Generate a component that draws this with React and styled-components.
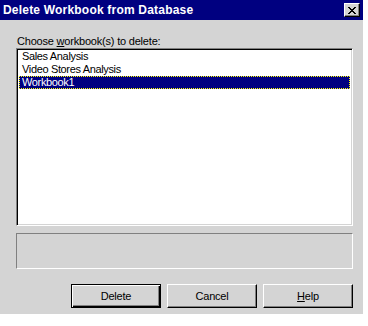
import React from "react";
import styled, { createGlobalStyle } from "styled-components";

const Global = createGlobalStyle`
  html, body { margin: 0; padding: 0; background: #ffffff; }
  body { font-family: "Liberation Sans", Arial, sans-serif; }
`;

const Window = styled.div`
  width: 363px;
  height: 314px;
  background: #d4d4d4;
  display: flex;
  flex-direction: column;
  box-sizing: border-box;
`;

const TitleBar = styled.div`
  height: 20px;
  background: #000080;
  display: flex;
  align-items: center;
  justify-content: space-between;
  padding: 0 3px 0 3px;
  box-sizing: border-box;
`;

const Title = styled.span`
  color: #ffffff;
  font-weight: bold;
  font-size: 12px;
  letter-spacing: 0.2px;
`;

const CloseButton = styled.div`
  width: 16px;
  height: 14px;
  box-sizing: border-box;
  background: #d4d4d4;
  border-top: 1px solid #ffffff;
  border-left: 1px solid #ffffff;
  border-right: 1px solid #000000;
  border-bottom: 1px solid #000000;
  box-shadow: inset -1px -1px 0 #808080;
  display: flex;
  align-items: center;
  justify-content: center;
`;

const Body = styled.div`
  flex: 1;
  display: flex;
  flex-direction: column;
  padding: 15px 10px 6px 16px;
`;

const Label = styled.div`
  font-size: 11px;
  line-height: 13px;
  letter-spacing: -0.2px;
  color: #000;
  padding-left: 1px;
  height: 13px;
`;

const ListBox = styled.div`
  height: 178px;
  box-sizing: border-box;
  background: #ffffff;
  border-top: 1px solid #808080;
  border-left: 1px solid #808080;
  border-right: 1px solid #ffffff;
  border-bottom: 1px solid #ffffff;
  box-shadow: inset 1px 1px 0 #000000, inset -1px -1px 0 #d4d4d4;
  padding: 1px 2px;
  display: flex;
  flex-direction: column;
`;

const Item = styled.div`
  font-size: 11px;
  line-height: 13px;
  height: 13px;
  letter-spacing: -0.35px;
  padding-left: 3px;
  color: ${(p) => (p.$selected ? "#ffffff" : "#000000")};
  background: ${(p) => (p.$selected ? "#000080" : "transparent")};
  outline: ${(p) => (p.$selected ? "1px dotted #ffff00" : "none")};
  outline-offset: -1px;
`;

const StatusBox = styled.div`
  margin-top: 7px;
  height: 36px;
  box-sizing: border-box;
  border-top: 1px solid #808080;
  border-left: 1px solid #808080;
  border-right: 1px solid #ffffff;
  border-bottom: 1px solid #ffffff;
`;

const ButtonRow = styled.div`
  margin-top: 15px;
  display: flex;
  justify-content: flex-end;
  gap: 6px;
`;

const Button = styled.div`
  width: 90px;
  height: 24px;
  box-sizing: border-box;
  background: #d4d4d4;
  font-size: 11px;
  letter-spacing: -0.2px;
  color: #000;
  display: flex;
  align-items: center;
  justify-content: center;
  border-top: 1px solid ${(p) => (p.$default ? "#000000" : "#ffffff")};
  border-left: 1px solid ${(p) => (p.$default ? "#000000" : "#ffffff")};
  border-right: 1px solid #000000;
  border-bottom: 1px solid #000000;
  box-shadow: ${(p) =>
    p.$default
      ? "inset 1px 1px 0 #ffffff, inset -1px -1px 0 #000000, inset -2px -2px 0 #808080"
      : "inset -1px -1px 0 #808080"};
`;

const U = styled.span`
  text-decoration: underline;
`;

export default function App() {
  return (
    <>
      <Global />
      <Window>
        <TitleBar>
          <Title>Delete Workbook from Database</Title>
          <CloseButton>
            <svg width="8" height="7" viewBox="0 0 8 7">
              <path
                d="M0 0h2v1h1v1h2V1h1V0h2v1H7v1H6v1H5v1h1v1h1v1h1v1H6V6H5V5H3v1H2v1H0V6h1V5h1V4h1V3H2V2H1V1H0z"
                fill="#000"
              />
            </svg>
          </CloseButton>
        </TitleBar>
        <Body>
          <Label>
            Choose <U>w</U>orkbook(s) to delete:
          </Label>
          <ListBox>
            <Item>Sales Analysis</Item>
            <Item>Video Stores Analysis</Item>
            <Item $selected>Workbook1</Item>
          </ListBox>
          <StatusBox />
          <ButtonRow>
            <Button $default>Delete</Button>
            <Button>Cancel</Button>
            <Button>
              <span>
                <U>H</U>elp
              </span>
            </Button>
          </ButtonRow>
        </Body>
      </Window>
    </>
  );
}
